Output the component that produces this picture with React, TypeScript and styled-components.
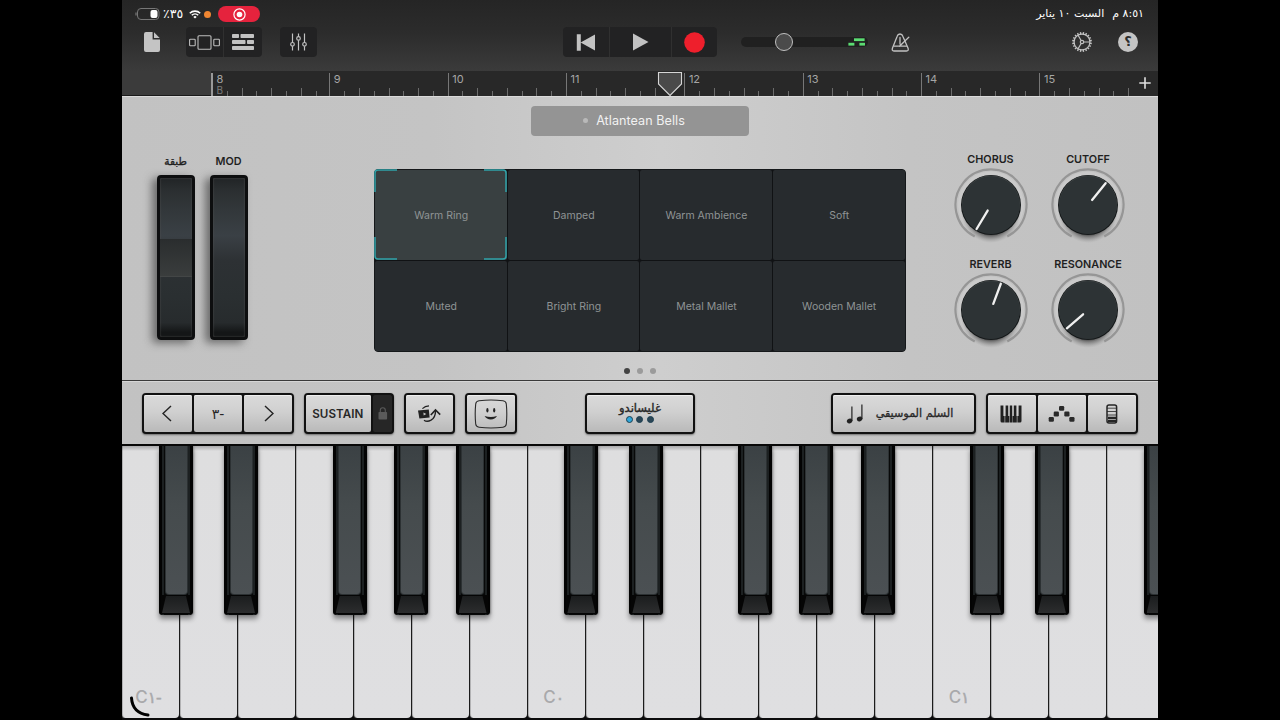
import React from 'react';
import styled, { createGlobalStyle, css } from 'styled-components';

const latin = `Inter, "Liberation Sans", sans-serif`;
const arabic = `"DejaVu Sans", sans-serif`;

const GlobalStyle = createGlobalStyle`
  * { box-sizing: border-box; }
  body { margin: 0; background: #000; overflow: hidden; font-family: ${latin}; }
  svg { display: block; flex: none; }
`;

const Screen = styled.div`
  width: 1280px;
  height: 720px;
  background: #000;
  display: flex;
  justify-content: center;
`;

const Tablet = styled.main`
  width: 1036px;
  height: 720px;
  display: flex;
  flex-direction: column;
  overflow: hidden;
  position: relative;
`;

const Header = styled.header`
  height: 96px;
  flex: none;
  background: linear-gradient(#252525, #2c2c2c 35%, #3b3b3b 75%);
  border-bottom: 1px solid #1a1a1a;
`;

const StatusBar = styled.div`
  height: 26px;
  padding: 2px 14px 0 13px;
  display: flex;
  align-items: center;
  justify-content: space-between;
`;

const StatusGroup = styled.div`
  display: flex;
  align-items: center;
`;

const Ltr = styled.bdo.attrs({ dir: 'ltr' })``;

const BatteryText = styled(Ltr)`
  font: 12.5px/14px ${arabic};
  color: #fff;
  width: 21px;
  margin: 0 5px 0 3px;
  white-space: nowrap;
`;

const OrangeDot = styled.span`
  width: 7px;
  height: 7px;
  border-radius: 50%;
  background: #ef8632;
  margin: 0 7px 0 3px;
`;

const RecordingPill = styled.span`
  width: 42px;
  height: 16px;
  border-radius: 8px;
  background: #e5233d;
  display: flex;
  align-items: center;
  justify-content: center;
`;

const DateTime = styled.div`
  direction: rtl;
  display: flex;
  gap: 8px;
  font: 11px/16px ${arabic};
  color: #fff;
  white-space: nowrap;
`;

const Toolbar = styled.div`
  height: 45px;
  padding: 0 20px 13px 22px;
  display: flex;
  align-items: center;
`;

const ButtonGroup = styled.div<{ $left: number }>`
  margin-left: ${p => p.$left}px;
  height: 30px;
  display: flex;
  border-radius: 4px;
  background: #222223;
  overflow: hidden;
`;

const ToolButton = styled.button<{ $w: number }>`
  width: ${p => p.$w}px;
  height: 30px;
  padding: 0;
  border: 0;
  background: none;
  display: flex;
  align-items: center;
  justify-content: center;
  & + & { border-left: 1px solid #303030; }
`;

const Volume = styled.div`
  width: 127px;
  height: 20px;
  margin: 0 23px 0 24px;
  display: flex;
  align-items: center;
`;

const VolumeTrack = styled.div`
  width: 127px;
  height: 10px;
  border-radius: 5px;
  background: #202020;
  display: flex;
  align-items: center;
  justify-content: space-between;
  padding: 0 2px 0 34px;
`;

const VolumeKnob = styled.span`
  width: 18px;
  height: 18px;
  border-radius: 50%;
  background: #4b4b4b;
  border: 1px solid #c0c0c0;
`;

const ToolRight = styled.div`
  margin-left: auto;
  display: flex;
  align-items: center;
  gap: 26px;
`;

const Help = styled.span`
  width: 20px;
  height: 20px;
  border-radius: 50%;
  background: #c4c4c4;
  color: #2c2c2c;
  font: bold 13px/20px ${arabic};
  text-align: center;
`;

const RulerRow = styled.div`
  height: 25px;
  display: flex;
  padding-left: 89px;
`;

const Ruler = styled.div`
  flex: 1;
  min-width: 0;
  background: #282828;
  display: flex;
  justify-content: space-between;
`;

const Bars = styled.div`
  width: 920px;
  height: 25px;
  display: flex;
  overflow: hidden;
`;

const Bar = styled.div`
  width: 118.35px;
  height: 23px;
  margin-top: 2px;
  flex: none;
  display: grid;
  grid-template-columns: repeat(8, 14.8px);
  align-items: end;
  border-left: 1px solid #777;
  &:first-child { border-left: 2px solid #999; }
`;

const BarLabel = styled.span`
  grid-column: 1 / -1;
  grid-row: 1;
  align-self: start;
  padding-left: 3.5px;
  font: 11px/12px ${latin};
  color: #a5a5a5;
  small { display: block; font-size: 10px; line-height: 10px; color: #7c7c7c; }
`;

const Tick = styled.i<{ $n: number }>`
  grid-row: 1;
  grid-column: ${p => p.$n + 1};
  margin-left: -1px;
  width: 1px;
  height: ${p => (p.$n % 2 ? 5 : 8)}px;
  background: #6c6c6c;
`;

const AddSection = styled.button`
  width: 27px;
  height: 24px;
  border: 0;
  padding: 0;
  background: none;
  display: flex;
  align-items: center;
  justify-content: center;
`;

const Playhead = styled.svg`
  position: absolute;
  left: 535px;
  top: 71px;
`;

const metal = css`
  background: linear-gradient(90deg, #c2c2c2 0%, #c4c4c4 30%, #cecece 52%, #c4c4c4 76%, #c1c1c1 100%);
`;

const Instrument = styled.section`
  ${metal}
  height: 285px;
  flex: none;
  border-top: 1px solid #dadada;
  border-bottom: 1px solid #3a3a3a;
  display: flex;
  flex-direction: column;
  align-items: center;
`;

const PatchName = styled.div`
  width: 218px;
  height: 30px;
  margin-top: 9px;
  flex: none;
  border-radius: 4px;
  background: #949494;
  color: #f1f1f1;
  font: 12.6px/28px ${latin};
  letter-spacing: 0.05px;
  display: flex;
  align-items: center;
  justify-content: center;
  gap: 8px;
  padding: 0 12px 1px 0;
`;

const PatchDot = styled.span`
  width: 5px;
  height: 5px;
  border-radius: 50%;
  background: #b9b9b9;
`;

const InstrumentRow = styled.div`
  width: 100%;
  height: 224px;
  flex: none;
  display: flex;
  padding: 14px 33px 0 35px;
`;

const Wheels = styled.div`
  display: flex;
  gap: 15px;
  width: 217px;
`;

const WheelColumn = styled.div`
  width: 38px;
  display: flex;
  flex-direction: column;
  align-items: center;
  padding: 5px 1px 0 0;
`;

const PartLabel = styled.span<{ $ar?: boolean }>`
  height: 14px;
  font: ${p => (p.$ar ? `10.5px/13px ${arabic}` : `600 10.8px/14px ${latin}`)};
  -webkit-text-stroke: ${p => (p.$ar ? '0.35px #1f1f1f' : '0')};
  color: #1f1f1f;
  white-space: nowrap;
`;

const Wheel = styled.div`
  width: 38px;
  height: 165px;
  flex: none;
  margin: 6px -1px 0 0;
  border: 3px solid #0d0e0f;
  border-radius: 4px;
  background: linear-gradient(#212426 0%, #2b2f31 8%, #32373a 20%, #3a4045 36%, #2d3134 52%, #2a2f31 75%, #272b2d 91%, #141617 97%);
  box-shadow: -5px 3px 9px rgba(50, 50, 50, 0.6), inset 0 0 2px #555;
  display: flex;
  align-items: center;
`;

const WheelGrip = styled.div`
  width: 32px;
  height: 38px;
  background: linear-gradient(#2a2d2e, #3a3d3d);
  border-bottom: 1px solid #434646;
`;

const PadGrid = styled.div`
  width: 532px;
  height: 183px;
  margin-top: 19px;
  border: 1px solid #15181a;
  border-radius: 4px;
  background: #101214;
  display: grid;
  grid-template-columns: repeat(4, 1fr);
  grid-template-rows: repeat(2, 1fr);
  gap: 1px;
`;

const Pad = styled.div<{ $on?: boolean }>`
  background: ${p => (p.$on ? '#394041' : '#272b2e')};
  color: #8f9495;
  font: 10.5px/14px ${latin};
  padding: 1px 0 0 1px;
  display: flex;
  align-items: center;
  justify-content: center;
  position: relative;
  border-radius: 2px;
`;

const PadCorners = styled.svg`
  position: absolute;
  left: -1px;
  top: -1px;
`;

const Knobs = styled.div`
  margin-left: 48px;
  display: grid;
  grid-template-columns: 74px 74px;
  grid-auto-rows: 105.4px;
  column-gap: 23.5px;
  padding-top: 2.6px;
`;

const KnobCell = styled.div`
  display: flex;
  flex-direction: column;
  align-items: center;
  svg { margin-top: 1.2px; }
`;

const PageDots = styled.div`
  display: flex;
  gap: 7px;
  margin-top: 7.5px;
  padding-right: 1px;
`;

const PageDot = styled.span<{ $on?: boolean }>`
  width: 6px;
  height: 6px;
  border-radius: 50%;
  background: ${p => (p.$on ? '#434343' : '#9b9b9b')};
`;

const Controls = styled.section`
  ${metal}
  height: 63px;
  flex: none;
  padding: 11px 20px 0;
  border-top: 1px solid #d6d6d6;
  display: flex;
`;

const ControlGroup = styled.div<{ $left?: number }>`
  height: 41px;
  margin-left: ${p => p.$left ?? 0}px;
  border: 2px solid #111;
  border-radius: 4px;
  background: #111;
  display: flex;
  gap: 2px;
  box-shadow: 0 1px 2px rgba(0, 0, 0, 0.45);
`;

const ControlButton = styled.button<{ $w: number; $dark?: boolean; $shift?: number }>`
  width: ${p => p.$w}px;
  height: 37px;
  padding: 0 ${p => p.$shift ?? 0}px 0 0;
  border: 0;
  border-radius: 2px;
  background: ${p => (p.$dark ? '#262626' : 'linear-gradient(#dadada, #d0d0d0 45%, #b9b9b9)')};
  box-shadow: ${p => (p.$dark ? 'none' : 'inset 0 1px 0 #efefef')};
  color: #272727;
  display: flex;
  align-items: center;
  justify-content: center;
`;

const SustainText = styled.span`
  font: 600 11.6px/14px ${latin};
  letter-spacing: 0.05px;
`;

const OctaveText = styled(Ltr)`
  font: 14px/16px ${arabic};
  letter-spacing: 1.5px;
`;

const Glissando = styled.div`
  display: flex;
  flex-direction: column;
  align-items: center;
  gap: 1px;
  font: 11.5px/13px ${arabic};
  -webkit-text-stroke: 0.4px #272727;
  margin-top: -3px;
`;

const ModeDots = styled.div`
  display: flex;
  gap: 3.5px;
`;

const ModeDot = styled.span<{ $on?: boolean }>`
  width: 7px;
  height: 7px;
  border-radius: 50%;
  border: 1px solid #1d3f50;
  background: ${p => (p.$on ? '#2fa8dc' : '#2a4656')};
`;

const ScaleLabel = styled.span`
  font: 11.2px/14px ${arabic};
  -webkit-text-stroke: 0.3px #272727;
  margin-left: 12px;
  white-space: nowrap;
`;

const Keyboard = styled.section`
  height: 276px;
  flex: none;
  background: #0b0b0c;
  border-top: 2px solid #080808;
  position: relative;
  overflow: hidden;
`;

const WhiteKeys = styled.div`
  display: flex;
  height: 272px;
  margin-left: -0.6px;
`;

const WhiteKey = styled.div`
  width: 57.92px;
  height: 272px;
  flex: none;
  border-left: 1px solid #1b1b1b;
  border-radius: 0 0 4px 4px;
  background: linear-gradient(#a9a9ab, #dededf 5px, #dfdfe1);
  box-shadow: inset 1px 0 0 rgba(0, 0, 0, 0.2);
  padding: 242px 5px 0 0;
  text-align: center;
`;

const NoteName = styled(Ltr)`
  display: block;
  font: 500 17px/18px ${latin};
  color: #a9a9ab;
  white-space: nowrap;
  i { font: normal 15.5px/18px ${arabic}; -webkit-text-stroke: 0.5px #a9a9ab; }
`;

const BlackKey = styled.div`
  position: absolute;
  top: 0;
  width: 34px;
  height: 169px;
  border-radius: 0 0 3px 3px;
  background: linear-gradient(90deg, #030303 0 2.5px, #1c2021 3.5px 4.5px, #080909 5.5px 28.5px, #1c2021 29.5px 30.5px, #030303 31.5px);
  box-shadow: 0 4px 5px rgba(0, 0, 0, 0.4), 1px 0 2px rgba(0, 0, 0, 0.25);
  display: flex;
  flex-direction: column;
  align-items: center;
`;

const KeyFace = styled.div`
  width: 23px;
  height: 149px;
  flex: none;
  border-radius: 0 0 4px 4px;
  background: linear-gradient(#3b4144, #454b4d 40%, #4b5053);
  border: 1px solid #2c3133;
  border-top: 0;
`;

const KeyFront = styled.div`
  width: 30px;
  height: 19px;
  background: #050505;
  display: flex;
  justify-content: center;
`;

const KeyLip = styled.div`
  width: 28px;
  height: 17px;
  margin-top: 1px;
  clip-path: polygon(4px 0, 24px 0, 28px 17px, 0 17px);
  background: linear-gradient(#1b1d1e, #2c2d2e);
`;

const CornerHint = styled.svg`
  position: absolute;
  left: 6px;
  top: 694px;
`;

const Knob = ({ name, angle }: { name: string; angle: number }) => (
  <KnobCell>
    <PartLabel>{name}</PartLabel>
    <svg width="74" height="78" viewBox="-37 -37 74 78">
      <defs>
        <radialGradient id={`sh-${name}`}>
          <stop offset="0.75" stopColor="#444" stopOpacity="0.9" />
          <stop offset="1" stopColor="#999" stopOpacity="0" />
        </radialGradient>
      </defs>
      <path d="M-16.3 31.5A35.5 35.5 0 1 1 16.3 31.5" fill="none" stroke="#969696" strokeWidth="2.2" />
      <circle r="33" cy="-0.5" fill="#cfcfcf" opacity="0.6" />
      <ellipse rx="30.5" ry="33" cy="5" fill={`url(#sh-${name})`} />
      <circle r="30" fill="#15191a" />
      <circle r="29" cy="-0.6" fill="#3d4243" />
      <circle r="28.8" cy="0.1" fill="#2d3335" />
      <line y1="-6.5" y2="-28" stroke="#f0f0f0" strokeWidth="2.3" strokeLinecap="round" transform={`rotate(${angle})`} />
    </svg>
  </KnobCell>
);

const bars = [8, 9, 10, 11, 12, 13, 14, 15];
const pads = ['Warm Ring', 'Damped', 'Warm Ambience', 'Soft', 'Muted', 'Bright Ring', 'Metal Mallet', 'Wooden Mallet'];
const octaveStarts = [0, 405.4, 810.9];
const blackOffsets = [37, 102, 210.7, 272, 333.5];
const octaveNames: Record<number, string> = { 0: '١-', 7: '٠', 14: '١' };
const teeth = Array.from({ length: 20 }, (_, i) => i * 18);

export default function App() {
  return (
    <Screen>
      <GlobalStyle />
      <Tablet>
        <Header>
          <StatusBar>
            <StatusGroup>
              <svg width="25" height="12" viewBox="0 0 25 12">
                <rect x="2.5" y="0.5" width="21.5" height="11" rx="3.5" fill="none" stroke="#777" />
                <path d="M1 4.5v3" stroke="#777" strokeWidth="1.2" />
                <rect x="15.5" y="2" width="7" height="8" rx="2" fill="#fff" />
              </svg>
              <BatteryText>٪٣٥</BatteryText>
              <svg width="12" height="9" viewBox="0 0 12 9" fill="none" stroke="#fff" strokeWidth="1.6">
                <path d="M0.8 3.3a7.4 7.4 0 0 1 10.4 0M2.8 5.3a4.6 4.6 0 0 1 6.4 0" />
                <path d="M6 8.6L4.3 6.9a2.5 2.5 0 0 1 3.4 0z" fill="#fff" stroke="none" />
              </svg>
              <OrangeDot />
              <RecordingPill>
                <svg width="13" height="13" viewBox="0 0 13 13">
                  <circle cx="6.5" cy="6.5" r="5.6" fill="none" stroke="#fff" strokeWidth="1.2" />
                  <circle cx="6.5" cy="6.5" r="2.8" fill="#fff" />
                </svg>
              </RecordingPill>
            </StatusGroup>
            <DateTime>
              <span>٨:٥١ م</span>
              <span>السبت ١٠ يناير</span>
            </DateTime>
          </StatusBar>

          <Toolbar>
            <svg width="16" height="20" viewBox="0 0 16 20" fill="#c4c4c4">
              <path d="M2 0h6.6v7.4H16V18a2 2 0 0 1-2 2H2a2 2 0 0 1-2-2V2a2 2 0 0 1 2-2z" />
              <path d="M10 0.3L15.7 6H10z" />
            </svg>
            <ButtonGroup $left={26}>
              <ToolButton $w={37}>
                <svg width="31" height="15" viewBox="0 0 31 15" fill="none" stroke="#bdbdbd" strokeWidth="1.1">
                  <rect x="0.6" y="4.2" width="5.6" height="6.6" rx="0.8" />
                  <rect x="9" y="0.8" width="13" height="13.4" rx="1" />
                  <rect x="24.8" y="4.2" width="5.6" height="6.6" rx="0.8" />
                </svg>
              </ToolButton>
              <ToolButton $w={39}>
                <svg width="22" height="16" viewBox="0 0 22 16" fill="#c2c2c2">
                  <rect width="7" height="4" rx="0.8" />
                  <rect x="8.5" width="13.5" height="4" rx="0.8" />
                  <rect y="6" width="13.5" height="4" rx="0.8" />
                  <rect x="15" y="6" width="7" height="4" rx="0.8" />
                  <rect y="12" width="22" height="4" rx="0.8" />
                </svg>
              </ToolButton>
            </ButtonGroup>
            <ButtonGroup $left={18}>
              <ToolButton $w={37}>
                <svg width="18" height="18" viewBox="0.5 0 18 18" fill="none" stroke="#c2c2c2" strokeWidth="1.2">
                  <path d="M3 0.5v9M3 13.2v4.3M9 0.5v3M9 7.2v10.3M15 0.5v9M15 13.2v4.3" />
                  <circle cx="3" cy="11.3" r="1.8" />
                  <circle cx="9" cy="5.4" r="1.8" />
                  <circle cx="15" cy="11.3" r="1.8" />
                </svg>
              </ToolButton>
            </ButtonGroup>
            <ButtonGroup $left={246}>
              <ToolButton $w={46}>
                <svg width="20" height="17" viewBox="0 0 20 17" fill="#c2c2c2">
                  <path d="M0.8 0.3h4v16.4h-4zM4.6 8.5L19 0.5v16z" />
                </svg>
              </ToolButton>
              <ToolButton $w={62}>
                <svg width="16" height="18" viewBox="0.5 0 16 18" fill="#c2c2c2"><path d="M0.5 0.5L16 9 0.5 17.5z" /></svg>
              </ToolButton>
              <ToolButton $w={46}>
                <svg width="21" height="21" viewBox="0 0 21 21"><circle cx="10.5" cy="10.5" r="10.3" fill="#ee1f2c" /></svg>
              </ToolButton>
            </ButtonGroup>
            <Volume>
              <VolumeTrack>
                <VolumeKnob />
                <svg width="18" height="8" viewBox="0 0 18 8" fill="#5bdc72">
                  <rect x="6" y="0.3" width="10.6" height="2.8" />
                  <rect x="0.4" y="4.8" width="6" height="2.8" />
                  <rect x="11.4" y="4.8" width="5.6" height="2.8" />
                </svg>
              </VolumeTrack>
            </Volume>
            <svg width="19" height="19" viewBox="0 0 19 19" fill="none" stroke="#c2c2c2" strokeWidth="1.3" strokeLinejoin="round" strokeLinecap="round">
              <path d="M6.2 3.2Q6.8 1 9 1t2.8 2.2L17 15q1 3-1.5 3H3Q0.5 18 1.5 15z" />
              <path d="M3.2 13.2h12.2M9 4.5v6.5M8.5 13.2L17.8 4.2" />
            </svg>
            <ToolRight>
              <svg width="20" height="20" viewBox="-10 -10 20 20" fill="none" stroke="#c2c2c2" strokeWidth="1.2">
                <circle r="7.9" />
                {teeth.map(a => <path key={a} d="M0 -8v-1.9" strokeWidth="1.4" transform={`rotate(${a + 9})`} />)}
                <circle r="1.7" />
                <path d="M1.7 0H7.9M-0.85 -1.5L-3.95 -6.8M-0.85 1.5L-3.95 6.8" />
              </svg>
              <Help>؟</Help>
            </ToolRight>
          </Toolbar>

          <RulerRow>
            <Ruler>
              <Bars>
                {bars.map(n => (
                  <Bar key={n}>
                    <BarLabel>{n}{n === 8 && <small>B</small>}</BarLabel>
                    {[1, 2, 3, 4, 5, 6, 7].map(t => <Tick key={t} $n={t} />)}
                  </Bar>
                ))}
              </Bars>
              <AddSection>
                <svg width="12" height="12" viewBox="0 0 12 12" stroke="#e0e0e0" strokeWidth="1.6"><path d="M6 0.3v11.4M0.3 6h11.4" /></svg>
              </AddSection>
            </Ruler>
          </RulerRow>
        </Header>

        <Instrument>
          <PatchName><PatchDot />Atlantean Bells</PatchName>
          <InstrumentRow>
            <Wheels>
              <WheelColumn>
                <PartLabel $ar>طبقة</PartLabel>
                <Wheel><WheelGrip /></Wheel>
              </WheelColumn>
              <WheelColumn>
                <PartLabel>MOD</PartLabel>
                <Wheel />
              </WheelColumn>
            </Wheels>
            <PadGrid>
              {pads.map((name, i) => (
                <Pad key={name} $on={i === 0}>
                  {i === 0 && (
                    <PadCorners width="134" height="92" viewBox="0 0 134 92" fill="none" stroke="#2fa3a9" strokeWidth="1.5">
                      <path d="M1 23V4Q1 1 4 1H23M110 1h19q3 0 3 3v19M132 68v19q0 3-3 3h-19M23 90H4q-3 0-3-3V68" />
                    </PadCorners>
                  )}
                  {name}
                </Pad>
              ))}
            </PadGrid>
            <Knobs>
              <Knob name="CHORUS" angle={211} />
              <Knob name="CUTOFF" angle={39} />
              <Knob name="REVERB" angle={20.5} />
              <Knob name="RESONANCE" angle={229} />
            </Knobs>
          </InstrumentRow>
          <PageDots>
            <PageDot $on /><PageDot /><PageDot />
          </PageDots>
        </Instrument>

        <Controls>
          <ControlGroup>
            <ControlButton $w={48}>
              <svg width="12" height="17" viewBox="0 0 12 17" fill="none" stroke="#222" strokeWidth="1.4"><path d="M9 1L1 8.5 9 16" /></svg>
            </ControlButton>
            <ControlButton $w={48}><OctaveText>٣-</OctaveText></ControlButton>
            <ControlButton $w={48}>
              <svg width="12" height="17" viewBox="0 0 12 17" fill="none" stroke="#222" strokeWidth="1.4"><path d="M3 1l8 7.5L3 16" /></svg>
            </ControlButton>
          </ControlGroup>
          <ControlGroup $left={10}>
            <ControlButton $w={65} $shift={1.5}><SustainText>SUSTAIN</SustainText></ControlButton>
            <ControlButton $w={19} $dark>
              <svg width="10" height="13" viewBox="0 0 10 13">
                <rect x="0.5" y="5" width="8.6" height="7.5" rx="0.8" fill="#5a5a5a" />
                <path d="M2.3 5.5V3.2a2.5 2.5 0 0 1 5 0v2.3" fill="none" stroke="#5a5a5a" strokeWidth="1.1" />
              </svg>
            </ControlButton>
          </ControlGroup>
          <ControlGroup $left={10}>
            <ControlButton $w={47} $shift={1.5}>
              <svg width="24" height="18" viewBox="0 0 24 18" fill="none" stroke="#222" strokeWidth="1.4">
                <path d="M1 5.4l10.8-0.9 0.8 8-10.2 0.9z" fill="#222" stroke="none" />
                <path d="M6.4 7.6l0.3 3 2.6-1.7z" fill="#c8c8c8" stroke="none" />
                <path d="M5.4 3.6Q8 1 12 0.9" strokeWidth="1.2" />
                <path d="M7 15.2Q10 17.4 14 15.2 18.6 12.4 18.5 5.6" />
                <path d="M13.8 10L18.5 5l4.7 4.6" strokeWidth="1.6" />
              </svg>
            </ControlButton>
          </ControlGroup>
          <ControlGroup $left={10}>
            <ControlButton $w={48}>
              <svg width="34" height="30" viewBox="0 0 34 30" fill="none" stroke="#2a2a2a" strokeWidth="1.1">
                <path d="M5 1.8Q17 0.2 29 1.8q3 0.4 3.3 3.2 1 10 0 20-0.3 2.8-3.3 3.2-12 1.6-24 0-3-0.4-3.3-3.2-1-10 0-20Q2 2.2 5 1.8z" />
                <ellipse cx="13.4" cy="11.2" rx="1.1" ry="2.3" fill="#222" stroke="none" />
                <ellipse cx="20.2" cy="11.2" rx="1.1" ry="2.3" fill="#222" stroke="none" />
                <path d="M10.6 17q6.2 2 12.4 0-2 3.4-6.2 3.4T10.6 17z" fill="#222" stroke="none" />
              </svg>
            </ControlButton>
          </ControlGroup>
          <ControlGroup $left={68}>
            <ControlButton $w={106}>
              <Glissando>
                <span>غليساندو</span>
                <ModeDots><ModeDot $on /><ModeDot /><ModeDot /></ModeDots>
              </Glissando>
            </ControlButton>
          </ControlGroup>
          <ControlGroup $left={136}>
            <ControlButton $w={141} $shift={8}>
              <svg width="18" height="20" viewBox="0 0 18 20" fill="#222" stroke="#222">
                <ellipse cx="3.6" cy="17" rx="2.8" ry="2.3" transform="rotate(-20 3.6 17)" stroke="none" />
                <path d="M5.9 17V2.5" strokeWidth="1.2" />
                <ellipse cx="13.6" cy="15" rx="2.8" ry="2.3" transform="rotate(-20 13.6 15)" stroke="none" />
                <path d="M15.9 15V0.5" strokeWidth="1.2" />
              </svg>
              <ScaleLabel>السلم الموسيقي</ScaleLabel>
            </ControlButton>
          </ControlGroup>
          <ControlGroup $left={10}>
            <ControlButton $w={48} $shift={2}>
              <svg width="22" height="18" viewBox="0 0 22 17" preserveAspectRatio="none">
                <path d="M0.5 0.5h2.9v10h1.2V16.5H2a1.5 1.5 0 0 1-1.5-1.5zM18.6 0.5h2.9V15a1.5 1.5 0 0 1-1.5 1.5h-2.6v-6h1.2zM5.6 0.5h2.6v10h0.9v6H5.2v-6h0.4zM9.8 0.5h2.4v10h0.3v6H9.6v-6h0.2zM13.8 0.5h2.6v10h0.4v6h-3.9v-6h0.9z" fill="#202020" />
              </svg>
            </ControlButton>
            <ControlButton $w={48} $shift={2}>
              <svg width="27" height="16" viewBox="0 0 27 16" fill="#2a2a2a">
                <rect x="11" y="0" width="5.2" height="4.8" rx="1.2" />
                <rect x="5.7" y="5.6" width="5.2" height="4.8" rx="1.2" />
                <rect x="16.3" y="5.6" width="5.2" height="4.8" rx="1.2" />
                <rect x="0.7" y="11" width="5.2" height="4.8" rx="1.2" />
                <rect x="21.3" y="11" width="5.2" height="4.8" rx="1.2" />
              </svg>
            </ControlButton>
            <ControlButton $w={48}>
              <svg width="12" height="20" viewBox="0 0 12 20" fill="none" stroke="#242424">
                <rect x="1" y="1" width="9.6" height="18" rx="2" strokeWidth="1.5" />
                <path d="M1 4.2h10M1 7.5h10M1 11h10" strokeWidth="0.8" />
                <path d="M2 13.8h8M2 16.8h8" strokeWidth="2.2" />
              </svg>
            </ControlButton>
          </ControlGroup>
        </Controls>

        <Keyboard>
          <WhiteKeys>
            {Array.from({ length: 18 }, (_, i) => (
              <WhiteKey key={i}>
                {octaveNames[i] && <NoteName>C<i>{octaveNames[i]}</i></NoteName>}
              </WhiteKey>
            ))}
          </WhiteKeys>
          {octaveStarts.flatMap(start => blackOffsets.map(o => start + o)).filter(x => x < 1036).map(x => (
            <BlackKey key={x} style={{ left: x }}>
              <KeyFace />
              <KeyFront><KeyLip /></KeyFront>
            </BlackKey>
          ))}
        </Keyboard>

        <Playhead width="26" height="26" viewBox="0 0 26 26">
          <path d="M1.5 1.5h23v11.5L13 24.5 1.5 13z" fill="#4a4a4a" stroke="#d6d6d6" strokeWidth="1.1" />
        </Playhead>
        <CornerHint width="24" height="24" viewBox="0 0 24 24">
          <path d="M3.5 4Q4.5 19 20 21" fill="none" stroke="#000" strokeWidth="3" strokeLinecap="round" />
        </CornerHint>
      </Tablet>
    </Screen>
  );
}
